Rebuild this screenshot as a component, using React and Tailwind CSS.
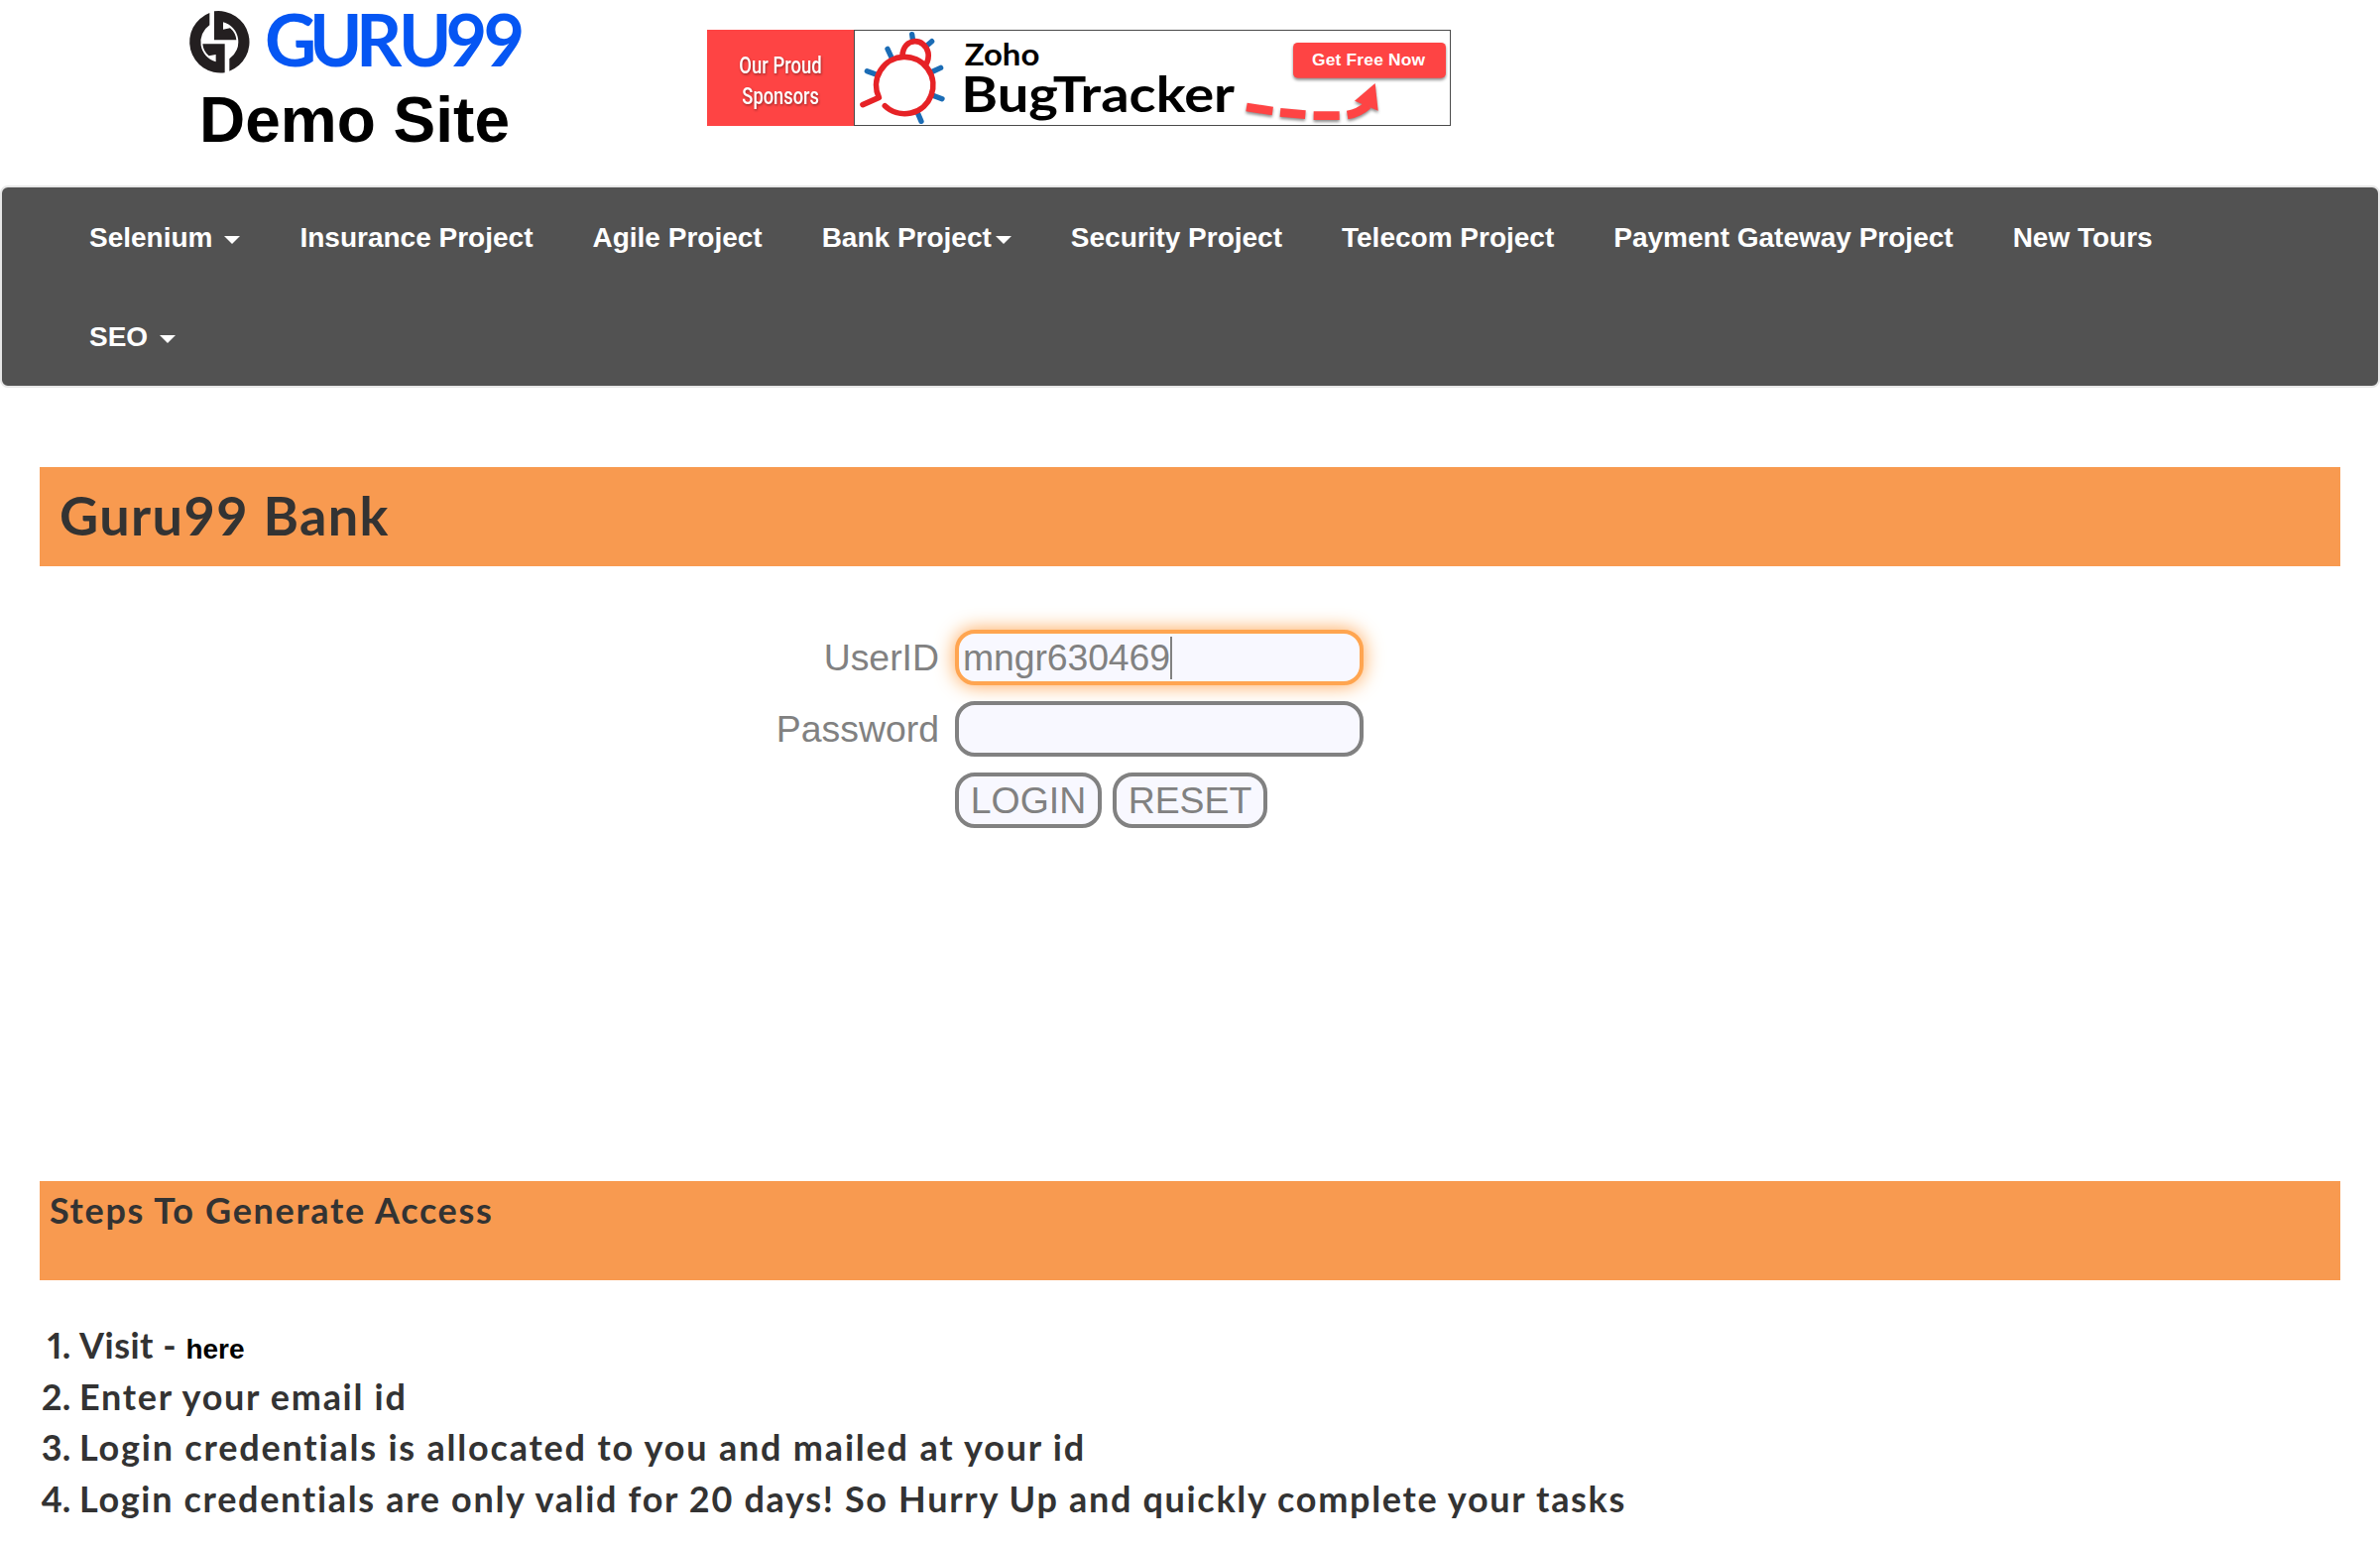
const navItems = [
  { label: "Selenium", caret: "ml-3" },
  { label: "Insurance Project" },
  { label: "Agile Project" },
  { label: "Bank Project", caret: "ml-1" },
  { label: "Security Project" },
  { label: "Telecom Project" },
  { label: "Payment Gateway Project" },
  { label: "New Tours" },
  { label: "SEO", caret: "ml-3" },
];

function Caret({ className }) {
  return (
    <span
      className={`${className} inline-block size-0 border-x-8 border-t-8 border-x-transparent border-t-white align-middle`}
    />
  );
}

const halfEmblem = "M79 24A94 94 0 0 0 125 205V118H58Q60 140 77 154L98 150V172A62 62 0 0 1 79 61Z";

function Logo() {
  return (
    <div className="flex w-[713px] flex-col pl-[185px] pt-[5px]">
      <div className="flex h-[74px]">
        <svg className="h-[74px] w-[74px]" viewBox="0 0 222 222" fill="#231f20">
          <path d={halfEmblem} />
          <path d={halfEmblem} transform="rotate(180 109 112)" />
        </svg>
        <svg className="h-[74px] w-[280px] overflow-visible" viewBox="0 0 280 74">
          <text
            x="8 53 100 143 190.500 228.500"
            y="62"
            fill="#0556f3"
            fontFamily="Lato, sans-serif"
            fontWeight="700"
            fontSize="72"
          >
            GURU99
          </text>
        </svg>
      </div>
      <h2 className="ml-4 mt-[5px] text-[64px] leading-[74px] font-bold text-black">Demo Site</h2>
    </div>
  );
}

function Banner() {
  return (
    <div className="mt-[30px] flex h-[97px] w-[750px]">
      <svg className="h-[97px] w-[148px] bg-[#fe4444]" viewBox="39 60 444 291">
        <g
          fill="#fff"
          fontFamily="Roboto, sans-serif"
          fontWeight="500"
          fontSize="74"
          style={{ filter: "drop-shadow(2px 4px 3px rgba(0,0,0,.4))" }}
        >
          <text x="136" y="191" textLength="250" lengthAdjust="spacingAndGlyphs">Our Proud</text>
          <text x="145" y="285" textLength="233" lengthAdjust="spacingAndGlyphs">Sponsors</text>
        </g>
      </svg>
      <svg className="h-[97px] w-[602px]" viewBox="483 60 1806 291">
        <rect x="484.500" y="61.500" width="1803" height="288" fill="#fff" stroke="#4a4a4a" strokeWidth="3" />
        <g stroke="#1b6cb5" strokeWidth="16" strokeLinecap="round">
          <path d="M659 74L662 95M719 95L704 108M585 118L597 144M523 185L552 196M746 175L716 189M750 269L718 257M687 337L675 309" />
        </g>
        <g fill="none" stroke="#e62226" strokeWidth="17" strokeLinecap="round" strokeLinejoin="round">
          <path d="M510 287L559 265A86 86 0 1 1 577 290" />
          <path d="M630 139C632 82 698 82 708 130Q711 148 701 166" />
        </g>
        <g fill="#000" fontFamily="Lato, sans-serif">
          <text x="818" y="167" fontSize="92" fontWeight="700" textLength="227" lengthAdjust="spacingAndGlyphs">Zoho</text>
          <text x="808" y="308" fontSize="150" fontWeight="700" textLength="827" lengthAdjust="spacingAndGlyphs">BugTracker</text>
        </g>
        <g style={{ filter: "drop-shadow(0 6px 4px rgba(0,0,0,.45))" }}>
          <rect x="1812" y="99" width="462" height="107" rx="14" fill="#fe4444" />
          <path
            d="M1671 294L1750 306M1773 310L1849 317M1874 320L1952 320M1976 318Q2012 312 2038 288"
            fill="none"
            stroke="#fe4444"
            strokeWidth="26"
          />
          <path d="M2060 222L2069 305L1998 275Z" fill="#fe4444" />
        </g>
        <text
          x="1869"
          y="167"
          fill="#fff"
          fontFamily="Liberation Sans, sans-serif"
          fontWeight="700"
          fontSize="52"
          textLength="342"
        >
          Get Free Now
        </text>
      </svg>
    </div>
  );
}

function Field({ label, children }) {
  return (
    <div className="flex h-14 items-center">
      <div className="w-[947px] text-right">{label}</div>
      <div className="ml-4 flex gap-[11px]">{children}</div>
    </div>
  );
}

const control = "h-14 rounded-[20px] border-4 bg-[#f8f8ff] leading-[48px] ";

export default function App() {
  return (
    <div className="h-[1560px] w-[2400px] overflow-hidden bg-white font-['Liberation_Sans',Arial,sans-serif] text-[#333]">
      <header className="flex h-[187px]">
        <Logo />
        <Banner />
      </header>

      <nav className="h-[204px] rounded-lg border-2 border-[#e7e7e7] bg-[#525252] pl-[58px]">
        <ul className="flex w-[2200px] flex-wrap text-[28px] font-bold text-white">
          {navItems.map((item) => (
            <li key={item.label} className="flex h-[100px] items-center px-[30px] pt-px whitespace-nowrap">
              <span>{item.label}</span>
              {item.caret && <Caret className={`${item.caret} mt-1`} />}
            </li>
          ))}
        </ul>
      </nav>

      <main>
        <h2 className="mx-10 mt-20 h-[100px] bg-[#f89a50] pl-5 font-['Lato',sans-serif] text-[54px] leading-[98px] font-bold tracking-[1.4px]">
          Guru99 Bank
        </h2>

        <form className="mt-16 flex h-[556px] flex-col gap-4 text-[37.4px] text-[#818181]">
          <Field label="UserID">
            <div className={`${control} flex w-[412px] items-center border-[#ffa550] pl-1 shadow-[0_0_20px_#ffa550]`}>
              <span className="tracking-[-0.1px]">mngr630469</span>
              <span className="h-[43px] w-[2px] bg-[#818181]" />
            </div>
          </Field>
          <Field label="Password">
            <div className={`${control} w-[412px] border-[#818181]`} />
          </Field>
          <Field>
            <button type="button" className={`${control} w-[148px] border-[#818181]`}>LOGIN</button>
            <button type="button" className={`${control} w-[156px] border-[#818181]`}>RESET</button>
          </Field>
        </form>

        <section className="font-['Lato',sans-serif] text-[36px] font-bold">
          <h3 className="mx-10 h-[100px] bg-[#f89a50] pt-1 pl-[10px] leading-[50px] tracking-[1.67px]">
            Steps To Generate Access
          </h3>
          <ol className="mt-10 list-decimal pl-20 leading-[51.5px]">
            <li className="h-[51.5px] marker:proportional-nums">
              <span className="tracking-[0.5px]">Visit - </span>
              <a className="font-['Liberation_Sans',Arial,sans-serif] text-[28px] leading-none text-black">here</a>
            </li>
            <li className="h-[51.5px]">
              <span className="tracking-[1.7px]">Enter your email id</span>
            </li>
            <li className="h-[51.5px]">
              <span className="tracking-[1.8px]">Login credentials is allocated to you and mailed at your id</span>
            </li>
            <li className="h-[51.5px]">
              <span className="tracking-[1.68px]">
                Login credentials are only valid for 20 days! So Hurry Up and quickly complete your tasks
              </span>
            </li>
          </ol>
        </section>
      </main>
    </div>
  );
}
